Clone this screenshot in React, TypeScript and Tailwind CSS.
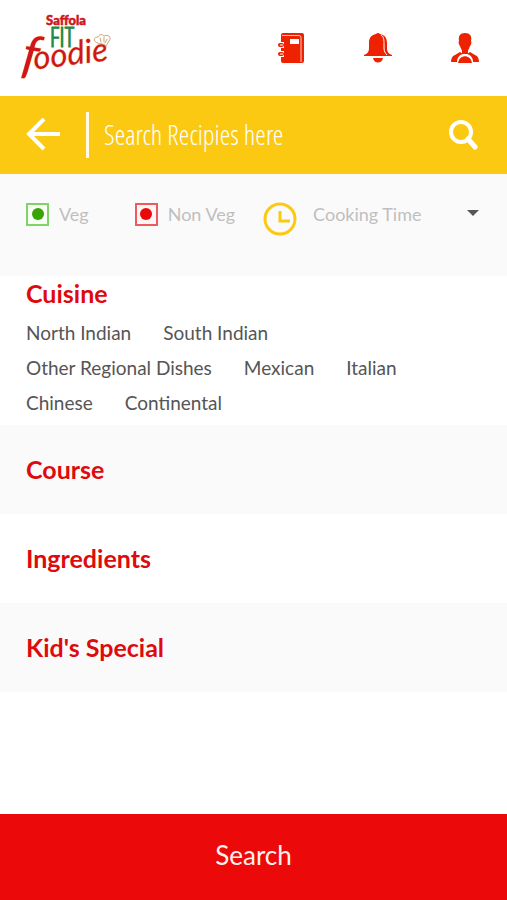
import React from 'react'

const cuisineRows = [
  ['North Indian', 'South Indian'],
  ['Other Regional Dishes', 'Mexican', 'Italian'],
  ['Chinese', 'Continental'],
]

const sections = [
  { title: 'Course', bg: 'bg-[#fafafa]' },
  { title: 'Ingredients', bg: 'bg-white' },
  { title: "Kid's Special", bg: 'bg-[#fafafa]' },
]

function Logo() {
  return (
    <svg width="100" height="72" viewBox="0 0 100 72" role="img" aria-label="Saffola Fit Foodie">
      <text x="50" y="13" textAnchor="middle" fontSize="13" className="font-['Lato',sans-serif] font-black" fill="#d0161b" stroke="#d0161b" strokeWidth="0.5">
        Saffola
      </text>
      <text x="46" y="35" textAnchor="middle" fontSize="27" className="font-['Open_Sans_Condensed_Light','Open_Sans_Condensed',sans-serif]" fill="#218a43" stroke="#218a43" strokeWidth="1">
        FIT
      </text>
      <g transform="rotate(-7 6 60)">
        <text x="4" y="59" className="font-['Lato',sans-serif] italic" fill="#d0161b" stroke="#fbe3b0" strokeWidth="1" paintOrder="stroke">
          <tspan fontSize="52" rotate="16">f</tspan>
          <tspan fontSize="33" dx="-2">oodie</tspan>
        </text>
      </g>
      {/* chef hat */}
      <g fill="none" stroke="#c9a67c" strokeWidth="1" strokeLinecap="round">
        <path d="M82 31c-5-1-5-6 0-6 1-3 5-3 6-1 4-2 8 1 5 5l-3 5" />
        <path d="M82 32c3-1 6 0 8 2M84 26l1 4M88 25v5M91 27l-2 4" />
      </g>
    </svg>
  )
}

function NotebookIcon() {
  return (
    <svg width="28" height="32" viewBox="0 0 28 32" aria-hidden="true">
      <path fill="#ee2200" d="M6 1h19q2 0 2 2v26q0 2-2 2H6q-2 0-2-2V3q0-2 2-2z" />
      <path fill="none" stroke="#fff" strokeWidth="1" d="M5 3.500h17q2 0 2 2V30" opacity=".75" />
      <path fill="#fff" d="M13 7h9v5h-9z" />
      <path fill="#fff" d="M3 10h4v6H3zM3 19h4v6H3z" />
      <rect x="1" y="11" width="6" height="4" rx="2" fill="#ee2200" />
      <rect x="1" y="20" width="6" height="4" rx="2" fill="#ee2200" />
      <path stroke="#fff" strokeWidth="1" d="M3 13h3M3 22h3" />
    </svg>
  )
}

function BellIcon() {
  return (
    <svg width="28" height="32" viewBox="0 0 28 32" aria-hidden="true">
      <path fill="#ee2200" d="M12 2q2-2 4 0c5 1 7 4 7 9v5c0 4 2 6 5 7v1H0v-1c3-1 5-3 5-7v-5c0-5 2-8 7-9z" />
      <path fill="none" stroke="#fff" strokeWidth="1" d="M17 3c3 2 3 5 3 9v4c0 3 1 5 3 7" />
      <path fill="#ee2200" d="M9 26h10c-1 6-9 6-10 0z" />
    </svg>
  )
}

function UserIcon() {
  return (
    <svg width="28" height="32" viewBox="0 0 28 32" aria-hidden="true">
      <path fill="#ee2200" d="M14 1c5 0 7 3 6 8 1 1 0 4-1 5-1 3-2 4-2 5v3h-6v-3c0-1-1-2-2-5-1-1-2-4-1-5-1-5 1-8 6-8z" />
      <path fill="#ee2200" d="M9 20l-5 3c-3 1-4 4-4 7h6c0-4 2-7 6-8zM19 20l5 3c3 1 4 4 4 7h-6c0-4-2-7-6-8z" />
      <path fill="#ee2200" d="M7 31c1-9 13-9 14 0z" />
      <path fill="none" stroke="#fff" strokeWidth="0.8" d="M6.500 31c1-10 14-10 15 0" />
    </svg>
  )
}

function BackArrow() {
  return (
    <svg width="34" height="34" viewBox="0 0 34 34" fill="none" stroke="#fff" strokeWidth="4" aria-hidden="true">
      <path d="M34 16H3M18 1L3 16l15 15" />
    </svg>
  )
}

function SearchIcon() {
  return (
    <svg width="30" height="30" viewBox="0 0 30 30" fill="none" stroke="#fff" aria-hidden="true">
      <circle cx="12" cy="12" r="10" strokeWidth="4" />
      <path d="M19 19l7 8" strokeWidth="5" strokeLinecap="round" />
    </svg>
  )
}

function ClockIcon() {
  return (
    <svg width="34" height="34" viewBox="0 0 34 34" fill="none" stroke="#fcc912" aria-hidden="true">
      <circle cx="17" cy="17" r="15" strokeWidth="3" />
      <path d="M17 9v10h10" strokeWidth="3" />
    </svg>
  )
}

export default function App() {
  return (
    <div className="flex min-h-screen flex-col bg-white font-['Lato',sans-serif] text-[#555]">
      <header className="flex h-24 items-center justify-between pl-4 pr-7">
        <a href="#home">
          <Logo />
        </a>
        <nav className="flex items-center gap-[59px]">
          <button aria-label="Recipe book"><NotebookIcon /></button>
          <button aria-label="Notifications"><BellIcon /></button>
          <button aria-label="Profile"><UserIcon /></button>
        </nav>
      </header>

      <form className="flex h-[78px] items-center bg-[#fcc912] pl-[26px] pr-7">
        <button type="button" aria-label="Back"><BackArrow /></button>
        <span className="ml-[26px] mr-[15px] h-[46px] w-[3px] bg-[#fffbe8]" />
        <input
          type="text"
          aria-label="Search recipes"
          placeholder="Search Recipies here"
          className="min-w-0 flex-1 bg-transparent font-['Open_Sans_Condensed_Light','Open_Sans_Condensed',sans-serif] text-[27px] text-white outline-none placeholder:text-white"
        />
        <button type="submit" aria-label="Search"><SearchIcon /></button>
      </form>

      <div className="flex h-[102px] items-start bg-[#fafafa] px-[26px] pt-6 text-lg text-[#bfbfbf]">
        <label className="mt-0.5 flex items-center gap-2.5">
          <input
            type="checkbox"
            className="grid h-[23px] w-[23px] appearance-none place-content-center border-2 border-[#7ed465] bg-[#f8fff5] before:h-3 before:w-3 before:rounded-full before:bg-[#3aa304]"
          />
          Veg
        </label>
        <label className="ml-[46px] mt-0.5 flex items-center gap-2.5">
          <input
            type="checkbox"
            className="grid h-[23px] w-[23px] appearance-none place-content-center border-2 border-[#ee5a60] bg-[#fff5f5] before:h-3 before:w-3 before:rounded-full before:bg-[#ea0808]"
          />
          Non Veg
        </label>
        <div className="ml-7 flex flex-1 items-start gap-4">
          <span className="mt-1"><ClockIcon /></span>
          <div className="relative mt-0.5 flex-1">
            <select aria-label="Cooking time" className="w-full appearance-none bg-transparent outline-none">
              <option>Cooking Time</option>
            </select>
            <svg width="12" height="6" viewBox="0 0 12 6" className="pointer-events-none absolute right-0.5 top-2.5" aria-hidden="true">
              <path d="M0 0h12L6 6z" fill="#555" />
            </svg>
          </div>
        </div>
      </div>

      <section className="h-[149px] px-[26px]">
        <h2 className="text-[25px] font-bold leading-[35px] text-[#de0a0d]">Cuisine</h2>
        <div className="mt-1">
          {cuisineRows.map((row) => (
            <div key={row[0]} className="flex gap-8">
              {row.map((name) => (
                <button key={name} className="text-[19px] leading-[35px]">{name}</button>
              ))}
            </div>
          ))}
        </div>
      </section>

      {sections.map(({ title, bg }) => (
        <h2 key={title} className={bg}>
          <button className="h-[89px] w-full px-[26px] text-left text-[25px] font-bold text-[#de0a0d]">{title}</button>
        </h2>
      ))}

      <button className="mt-auto h-[86px] w-full bg-[#eb0a09] pb-1 text-[26px] text-[#fff0ee]">Search</button>
    </div>
  )
}
